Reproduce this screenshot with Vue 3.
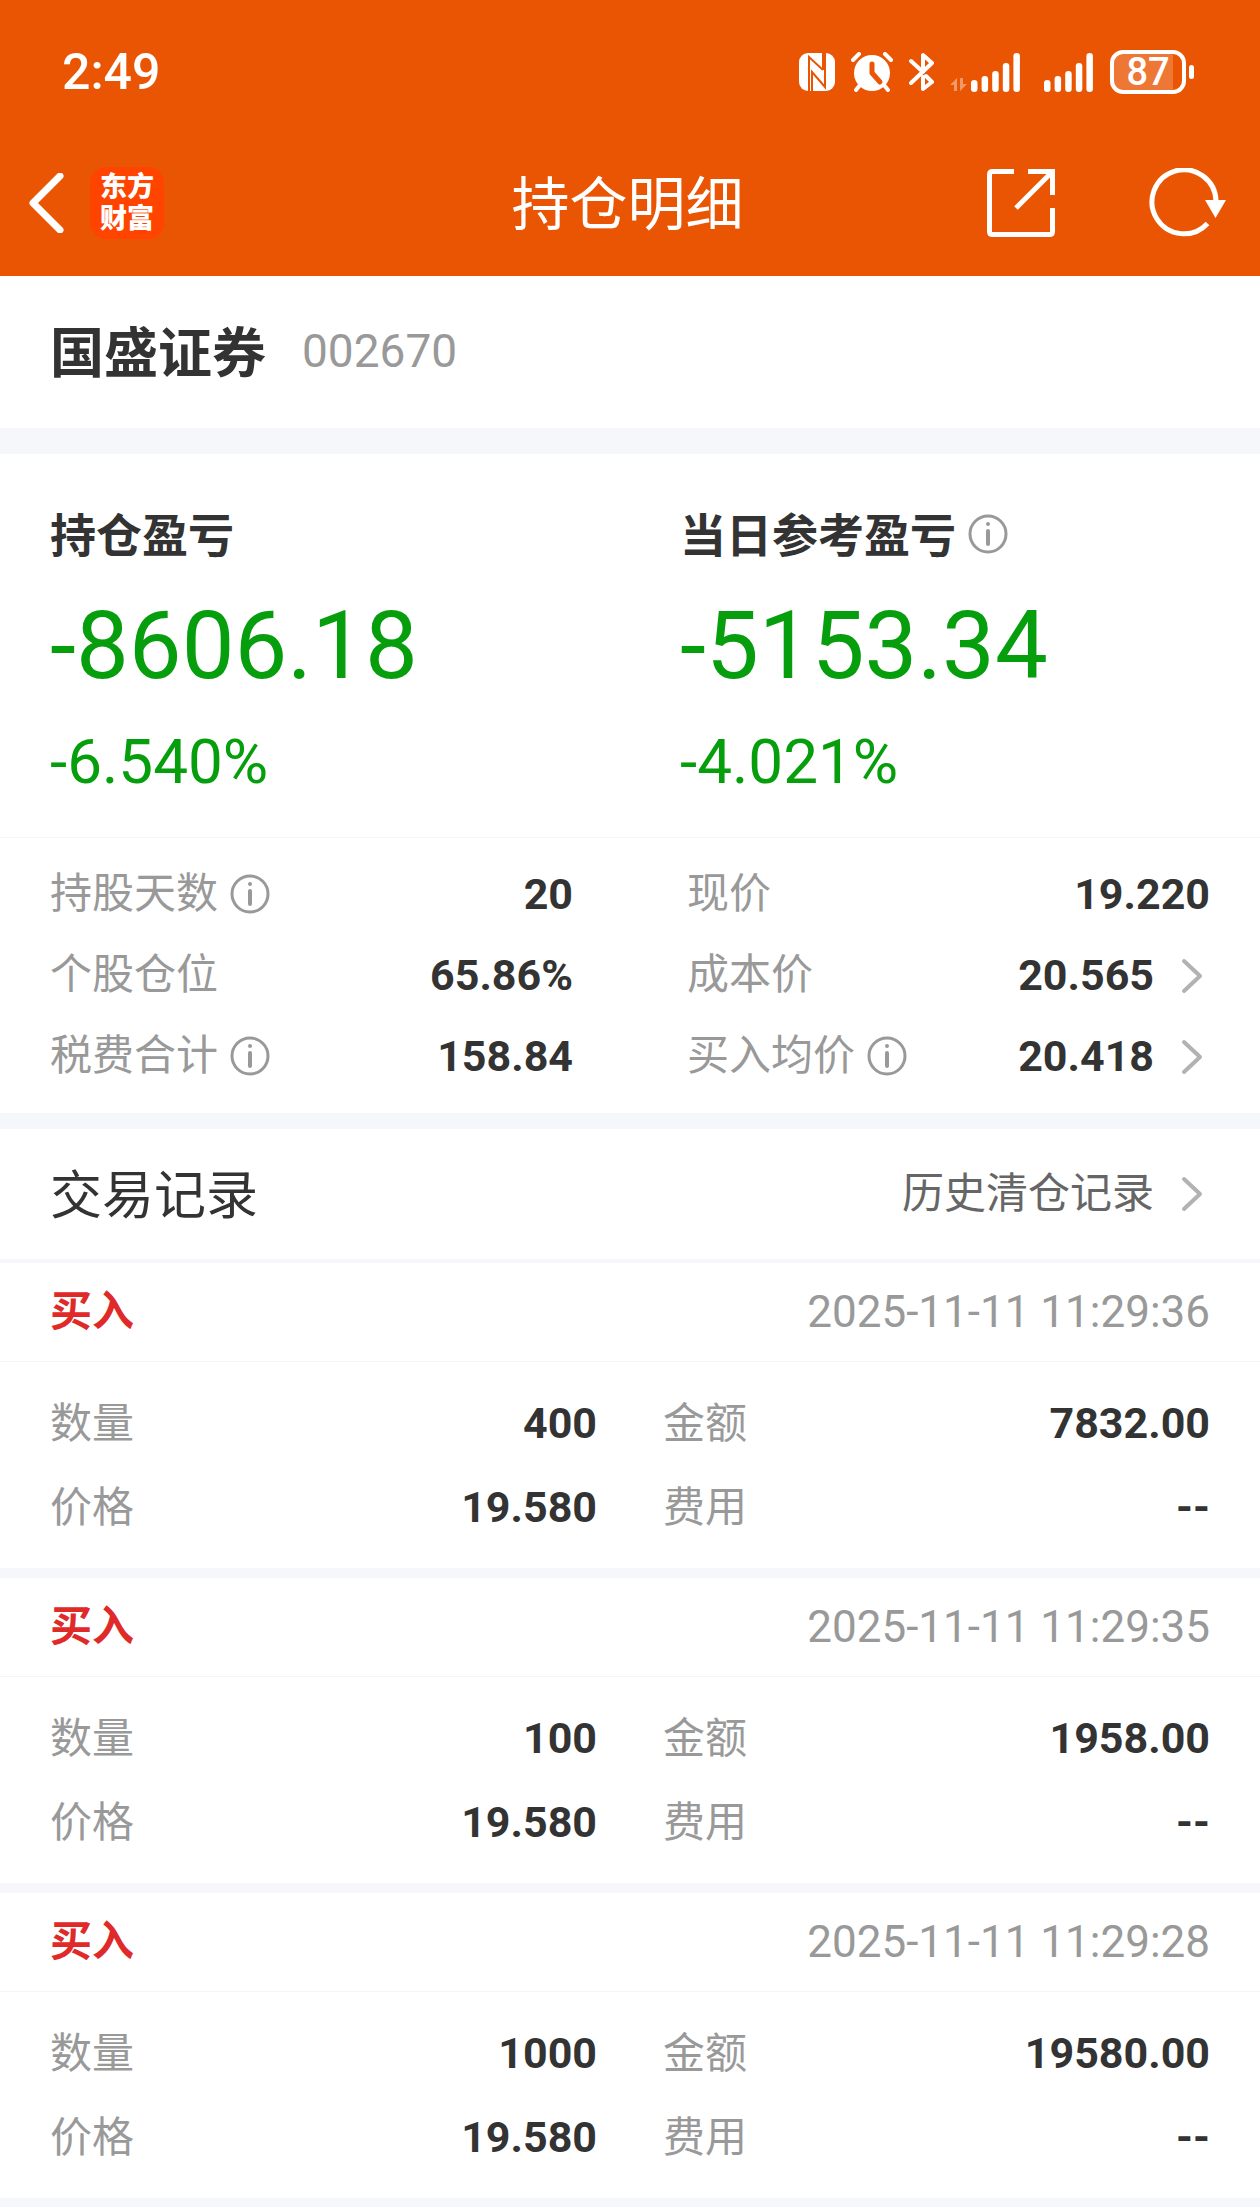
<script setup>
const stock = { name: '国盛证券', code: '002670' }

const profits = [
  { label: '持仓盈亏', value: '-8606.18', percent: '-6.540%', info: false },
  { label: '当日参考盈亏', value: '-5153.34', percent: '-4.021%', info: true },
]

const leftStats = [
  { label: '持股天数', value: '20', info: true },
  { label: '个股仓位', value: '65.86%' },
  { label: '税费合计', value: '158.84', info: true },
]

const rightStats = [
  { label: '现价', value: '19.220' },
  { label: '成本价', value: '20.565', link: true },
  { label: '买入均价', value: '20.418', info: true, link: true },
]

const records = [
  { type: '买入', time: '2025-11-11 11:29:36', count: '400', price: '19.580', amount: '7832.00', fee: '--' },
  { type: '买入', time: '2025-11-11 11:29:35', count: '100', price: '19.580', amount: '1958.00', fee: '--' },
  { type: '买入', time: '2025-11-11 11:29:28', count: '1000', price: '19.580', amount: '19580.00', fee: '--' },
]

const bars = [12, 16, 21, 29, 39]
</script>

<template>
  <div class="page">
    <header class="header">
      <div class="status">
        <span class="status__time">2:49</span>
        <div class="status__icons">
          <svg width="36" height="38" viewBox="0 0 36 38">
            <rect width="36" height="38" rx="9" fill="#fff" />
            <path d="M10 38V4L24 17M26 0V34L13 19V38M24 0V17" fill="none" stroke="#ea5504" stroke-width="2" />
          </svg>
          <svg width="42" height="40" viewBox="0 0 42 40">
            <circle cx="21" cy="21" r="18" fill="#fff" />
            <path d="M2 8L8 2M40 8L34 2M9 33L5 38M33 33L37 38" stroke="#fff" stroke-width="4" stroke-linecap="round" />
            <path d="M21 12V21L29 30" fill="none" stroke="#ea5504" stroke-width="5" stroke-linecap="round" stroke-linejoin="round" />
          </svg>
          <svg width="25" height="40" viewBox="0 0 25 40">
            <path d="M2 9L14 20M2 31L23 11L14 3V16M14 25V37L23 30L17 24" fill="none" stroke="#fff" stroke-width="4" stroke-linecap="round" stroke-linejoin="round" />
          </svg>
          <svg width="70" height="40" viewBox="0 0 70 40">
            <path d="M0 33L7 26V39H4V33ZM10 26H13V32H17L10 39Z" fill="#fff" fill-opacity="0.4" />
            <rect v-for="(h, i) in bars" :key="i" :x="21 + i * 10.6" :y="40 - h" width="6.5" :height="h" rx="3.2" fill="#fff" />
          </svg>
          <svg width="50" height="40" viewBox="0 0 50 40">
            <rect v-for="(h, i) in bars" :key="i" :x="i * 10.6" :y="40 - h" width="6.5" :height="h" rx="3.2" fill="#fff" />
          </svg>
          <div class="battery">
            <span class="battery__body">87</span>
            <span class="battery__tip"></span>
          </div>
        </div>
      </div>

      <nav class="nav">
        <div class="nav__side">
          <button class="icon-btn" type="button" aria-label="返回">
            <svg width="36" height="60" viewBox="0 0 36 60">
              <path d="M32 3L5 30L32 57" fill="none" stroke="#fff" stroke-width="7" stroke-linecap="round" stroke-linejoin="round" />
            </svg>
          </button>
          <div class="logo">
            <span>东方</span>
            <span>财富</span>
          </div>
        </div>
        <h1 class="nav__title">持仓明细</h1>
        <div class="nav__side nav__side--right">
          <button class="icon-btn" type="button" aria-label="分享">
            <svg width="68" height="68" viewBox="0 0 68 68" fill="none" stroke="#fff" stroke-width="5">
              <path d="M27 2.500H5.500Q2.500 2.500 2.500 5.500V62.500Q2.500 65.500 5.500 65.500H62.500Q65.500 65.500 65.500 62.500V39" />
              <path d="M41 2.500H65.500V26M64 4L29 39" />
            </svg>
          </button>
          <button class="icon-btn" type="button" aria-label="刷新">
            <svg width="78" height="70" viewBox="0 0 78 70">
              <path d="M58.500 55.500A32 32 0 1 1 67 33" fill="none" stroke="#fff" stroke-width="5" />
              <path d="M56 32H77L66.500 50Z" fill="#fff" />
            </svg>
          </button>
        </div>
      </nav>
    </header>

    <section class="stock">
      <h2 class="stock__name">{{ stock.name }}</h2>
      <span class="stock__code">{{ stock.code }}</span>
    </section>

    <section class="summary">
      <div class="profits">
        <div v-for="p in profits" :key="p.label" class="profit">
          <div class="profit__head">
            <h3 class="profit__label">{{ p.label }}</h3>
            <button v-if="p.info" class="icon-btn" type="button" aria-label="说明">
              <svg class="info" viewBox="0 0 40 40">
                <circle cx="20" cy="20" r="18" />
                <path d="M20 17V30M20 10V10.100" />
              </svg>
            </button>
          </div>
          <div class="profit__value">{{ p.value }}</div>
          <div class="profit__percent">{{ p.percent }}</div>
        </div>
      </div>

      <div class="stats">
        <dl v-for="(col, c) in [leftStats, rightStats]" :key="c" class="stats__col">
          <div v-for="s in col" :key="s.label" class="stat">
            <dt class="stat__label">
              {{ s.label }}
              <button v-if="s.info" class="icon-btn" type="button" aria-label="说明">
                <svg class="info" viewBox="0 0 40 40">
                  <circle cx="20" cy="20" r="18" />
                  <path d="M20 17V30M20 10V10.100" />
                </svg>
              </button>
            </dt>
            <dd class="stat__value">
              <a v-if="s.link" class="more" href="#">
                {{ s.value }}
                <svg class="chevron" viewBox="0 0 32 40"><path d="M6 5L22 20L6 35" /></svg>
              </a>
              <template v-else>{{ s.value }}</template>
            </dd>
          </div>
        </dl>
      </div>
    </section>

    <section>
      <div class="records-head">
        <h2 class="records-head__title">交易记录</h2>
        <a class="more records-head__link" href="#">
          历史清仓记录
          <svg class="chevron" viewBox="0 0 32 40"><path d="M6 5L22 20L6 35" /></svg>
        </a>
      </div>
      <div class="records">
        <article v-for="r in records" :key="r.time" class="record">
          <div class="record__head">
            <span class="record__type">{{ r.type }}</span>
            <time class="record__time">{{ r.time }}</time>
          </div>
          <dl class="record__body">
            <div class="record__cell"><dt>数量</dt><dd>{{ r.count }}</dd></div>
            <div class="record__cell"><dt>金额</dt><dd>{{ r.amount }}</dd></div>
            <div class="record__cell"><dt>价格</dt><dd>{{ r.price }}</dd></div>
            <div class="record__cell"><dt>费用</dt><dd>{{ r.fee }}</dd></div>
          </dl>
        </article>
      </div>
    </section>
  </div>
</template>

<style>
body {
  margin: 0;
  background: #f6f7fa;
}
</style>

<style scoped>
.page {
  font-family: Roboto, "Noto Sans CJK SC", sans-serif;
  font-size: 42px;
  line-height: 1.2;
  color: #333;
}
h1, h2, h3, dl, dd {
  margin: 0;
}
h1, h2, h3 {
  padding-top: 6px;
}
a {
  color: inherit;
  text-decoration: none;
}
.icon-btn {
  display: flex;
  padding: 0;
  border: 0;
  background: none;
  cursor: pointer;
}

/* header */
.header {
  background: #ea5504;
  color: #fff;
}
.status {
  display: flex;
  align-items: center;
  justify-content: space-between;
  height: 116px;
  padding: 14px 66px 0 62px;
}
.status__time {
  font-size: 50px;
  font-weight: 500;
}
.status__icons {
  display: flex;
  align-items: center;
  gap: 16px;
}
.status__icons svg:nth-of-type(5) {
  margin-left: 8px;
}
.battery {
  display: flex;
  align-items: center;
  gap: 3px;
}
.battery__body {
  box-sizing: border-box;
  width: 76px;
  height: 44px;
  border: 4px solid #fff;
  border-radius: 13px;
  background: linear-gradient(to right, rgba(255, 255, 255, 0.2) 87%, transparent 87%);
  font-size: 38px;
  font-weight: 500;
  line-height: 37px;
  text-align: center;
}
.battery__tip {
  width: 5px;
  height: 14px;
  border-radius: 3px;
  background: #fff;
}
.nav {
  display: grid;
  grid-template-columns: 1fr auto 1fr;
  align-items: center;
  height: 146px;
  padding: 0 33px 0 28px;
}
.nav__side {
  display: flex;
  align-items: center;
  gap: 26px;
}
.nav__side--right {
  justify-content: flex-end;
  gap: 94px;
}
.nav__title {
  font-size: 58px;
  font-weight: 400;
}
.logo {
  display: flex;
  flex-direction: column;
  padding: 4px 10px;
  border-radius: 16px;
  background: #ff4400;
  font-size: 27px;
  font-weight: 900;
  line-height: 32px;
}

/* stock */
.stock {
  display: flex;
  align-items: center;
  gap: 36px;
  height: 152px;
  padding: 0 50px;
  background: #fff;
}
.stock__name {
  font-size: 54px;
  font-weight: 700;
}
.stock__code {
  font-size: 46px;
  color: #999;
}

/* summary */
.summary {
  margin: 26px 0 16px;
  background: #fff;
}
.profits {
  display: grid;
  grid-template-columns: 1fr 1fr;
  padding: 50px 0 39px;
  border-bottom: 1px solid #f4f5f7;
}
.profit {
  padding-left: 50px;
}
.profit__head {
  display: flex;
  align-items: center;
  gap: 12px;
  height: 60px;
}
.profit__label {
  font-size: 46px;
  font-weight: 700;
}
.profit__value {
  margin: 26px 0 24px;
  font-size: 94px;
  line-height: 112px;
  color: #069e0c;
}
.profit__percent {
  font-size: 62px;
  line-height: 72px;
  color: #069e0c;
}
.info {
  width: 40px;
  height: 40px;
  fill: none;
  stroke: #999;
  stroke-width: 3;
  stroke-linecap: round;
}
.info path {
  stroke-width: 4;
}
.chevron {
  width: 32px;
  height: 40px;
  fill: none;
  stroke: #b2b2b2;
  stroke-width: 4;
  stroke-linecap: round;
  stroke-linejoin: round;
}
.stats {
  display: grid;
  grid-template-columns: 1fr 1fr;
  gap: 114px;
  padding: 16px 50px;
}
.stat {
  display: flex;
  align-items: center;
  justify-content: space-between;
  height: 81px;
}
.stat__label {
  display: flex;
  align-items: center;
  gap: 12px;
  color: #999;
}
.stat__value {
  font-size: 43px;
  font-weight: 700;
}
.more {
  display: flex;
  align-items: center;
  gap: 24px;
}

/* records */
.records-head {
  display: flex;
  align-items: center;
  justify-content: space-between;
  height: 130px;
  margin-bottom: 4px;
  padding: 0 50px;
  background: #fff;
}
.records-head__title {
  font-size: 52px;
  font-weight: 400;
}
.records-head__link {
  color: #666;
}
.records {
  display: flex;
  flex-direction: column;
  gap: 10px;
}
.record {
  background: #fff;
}
.record__head {
  display: flex;
  align-items: center;
  justify-content: space-between;
  height: 98px;
  padding: 0 50px;
  border-bottom: 1px solid #f4f5f7;
}
.record__type {
  font-weight: 700;
  color: #e02a2a;
}
.record__time {
  font-size: 44px;
  color: #999;
}
.record__body {
  display: grid;
  grid-template-columns: 1fr 1fr;
  column-gap: 66px;
  padding: 20px 50px 18px;
}
.record__cell {
  display: flex;
  align-items: center;
  justify-content: space-between;
  height: 84px;
}
.record__cell dt {
  color: #999;
}
.record__cell dd {
  font-size: 43px;
  font-weight: 700;
}
</style>
